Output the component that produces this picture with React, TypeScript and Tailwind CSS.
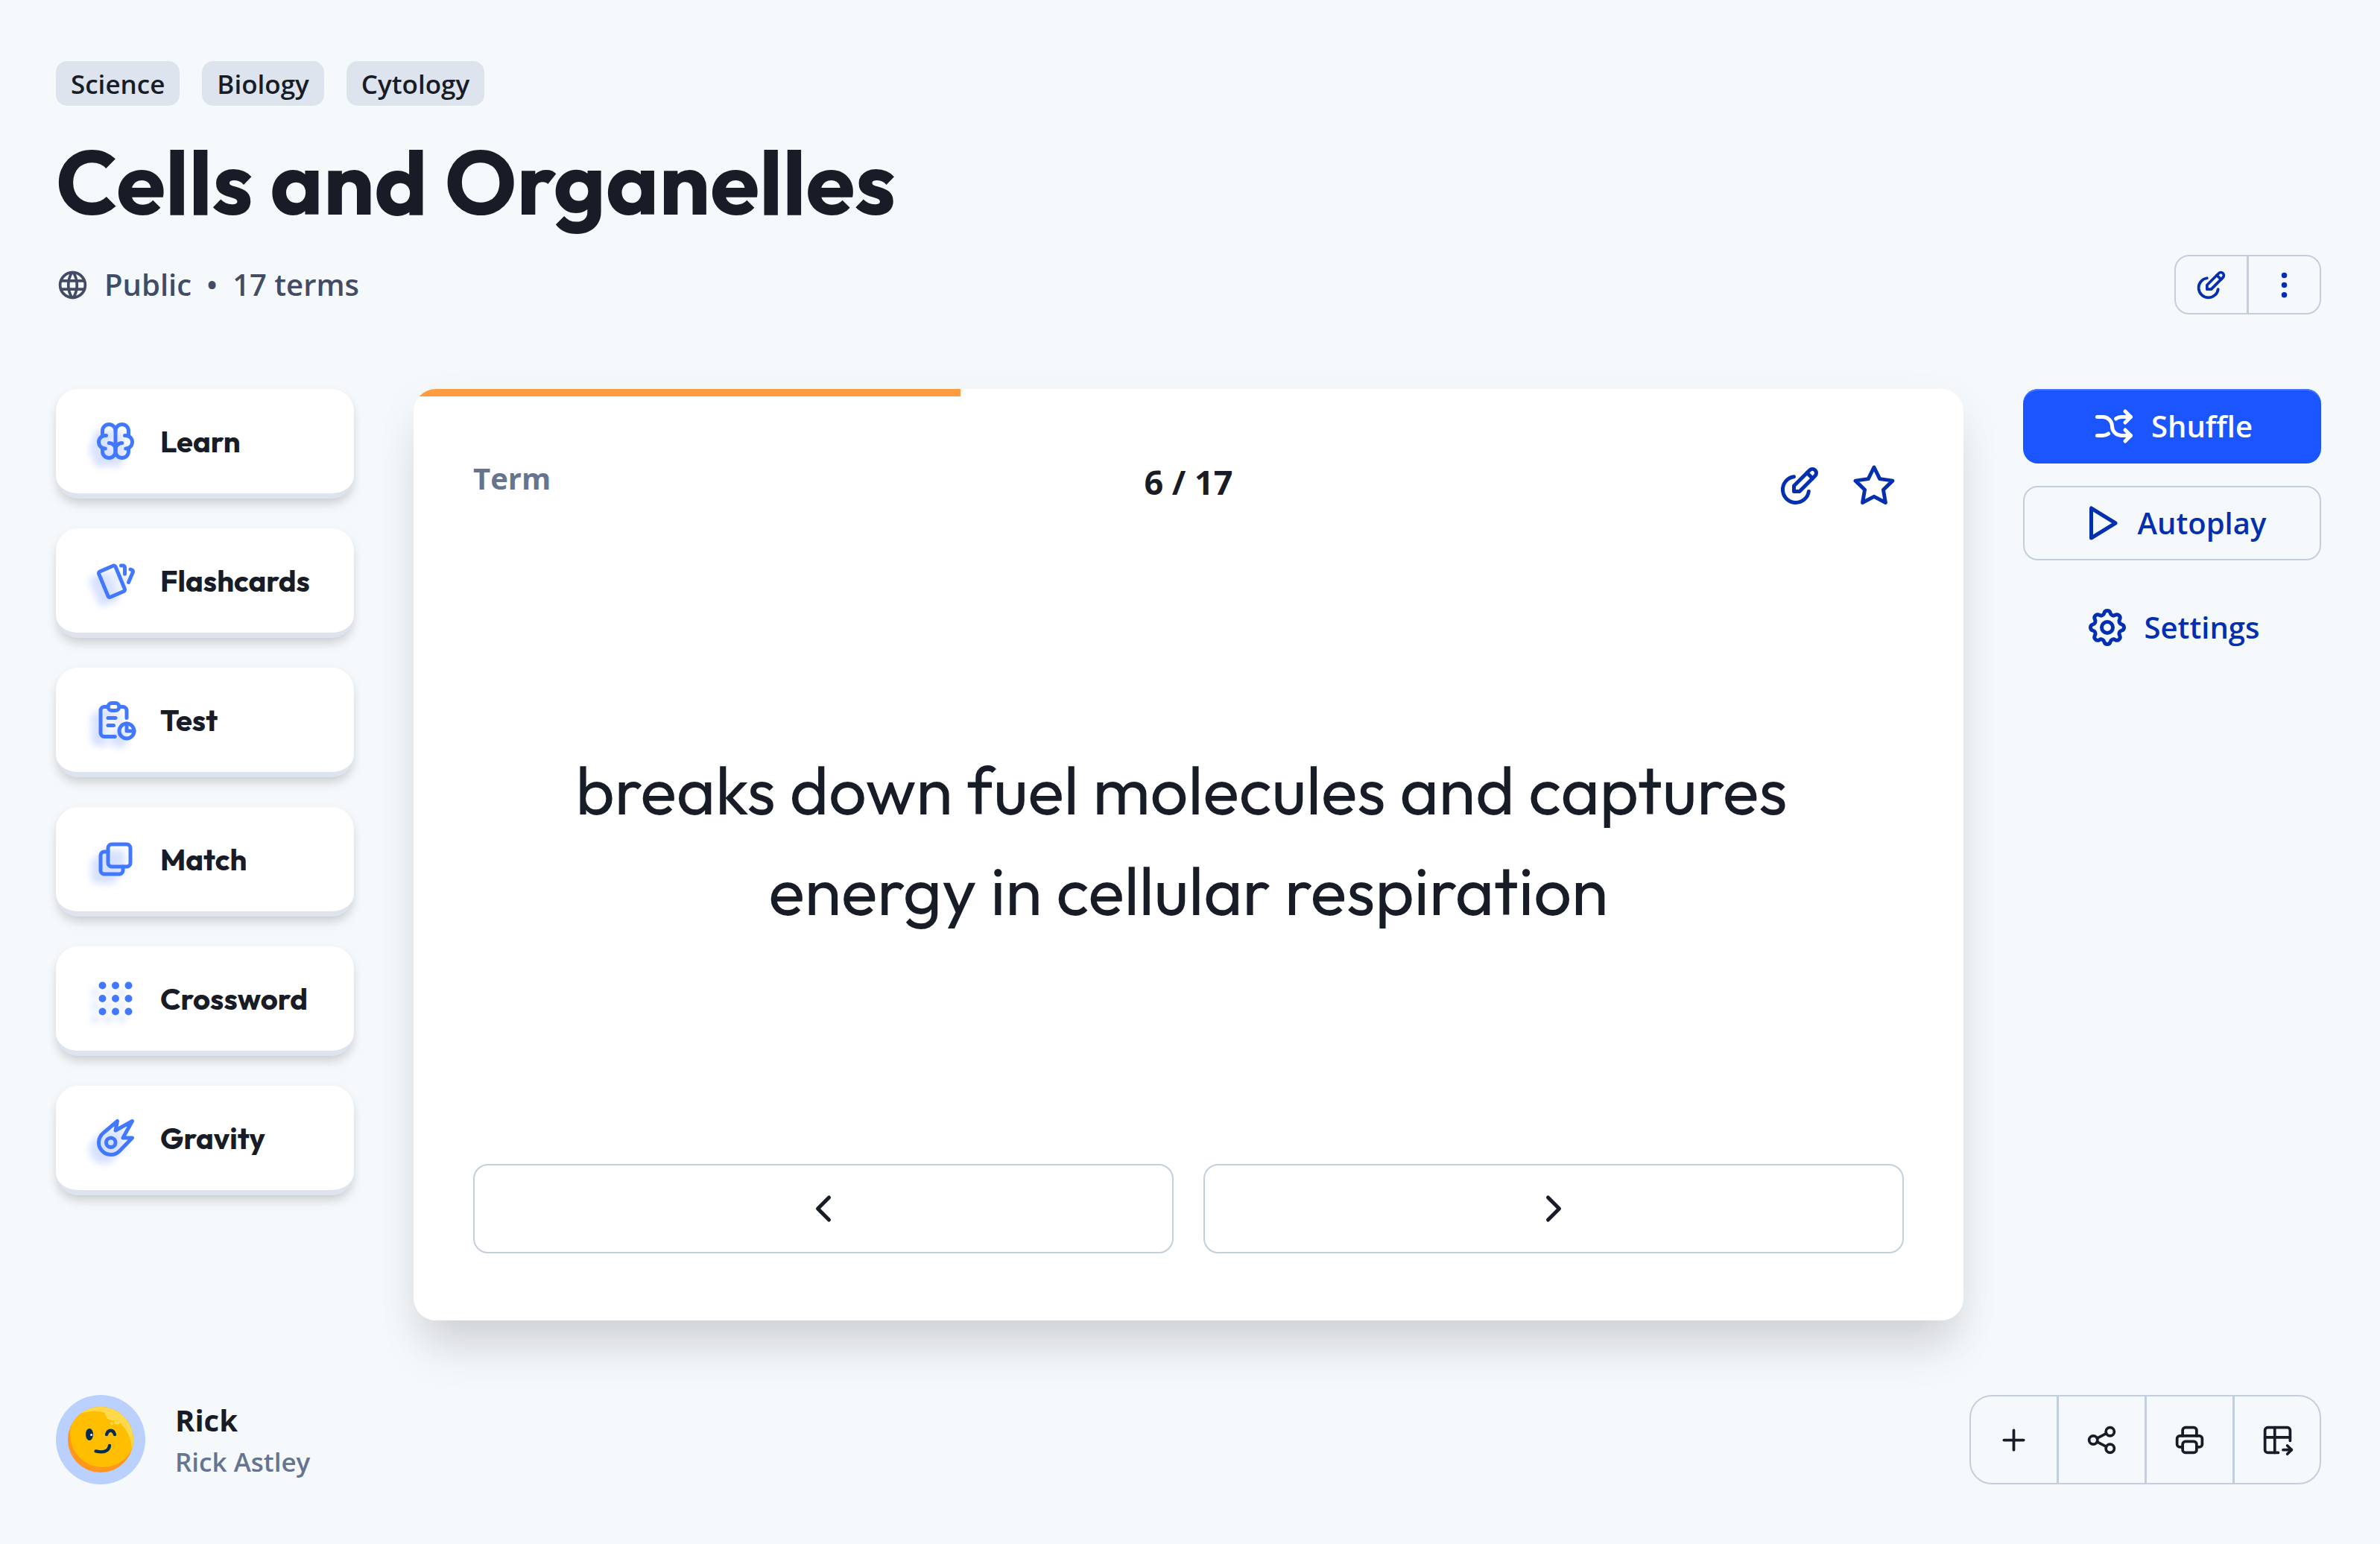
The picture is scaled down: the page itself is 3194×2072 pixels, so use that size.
import type { ReactNode } from "react";

type IconProps = { paths: string[]; className?: string };

function Icon({ paths, className = "" }: IconProps) {
  return (
    <svg
      viewBox="0 0 24 24"
      fill="none"
      stroke="currentColor"
      strokeWidth={2}
      strokeLinecap="round"
      strokeLinejoin="round"
      aria-hidden="true"
      className={`shrink-0 ${className}`}
    >
      {paths.map((d) => (
        <path key={d} d={d} />
      ))}
    </svg>
  );
}

const ring = (x: number, y: number, r: number) =>
  `M${x - r} ${y}a${r} ${r} 0 1 0 ${2 * r} 0a${r} ${r} 0 1 0 ${-2 * r} 0`;

const icons = {
  world: [ring(12, 12, 9), "M3.6 9h16.8", "M3.6 15h16.8", "M11.5 3a17 17 0 0 0 0 18", "M12.5 3a17 17 0 0 1 0 18"],
  brain: [
    "M15.5 13a3.5 3.5 0 0 0 -3.5 3.5v1a3.5 3.5 0 0 0 7 0v-1.8",
    "M8.5 13a3.5 3.5 0 0 1 3.5 3.5v1a3.5 3.5 0 0 1 -7 0v-1.8",
    "M17.5 16a3.5 3.5 0 0 0 0 -7h-.5",
    "M19 9.3v-2.8a3.5 3.5 0 0 0 -7 0",
    "M6.5 16a3.5 3.5 0 0 1 0 -7h.5",
    "M5 9.3v-2.8a3.5 3.5 0 0 1 7 0v10",
  ],
  cards: [
    "M3.604 7.197l7.138 -3.109a.96 .96 0 0 1 1.27 .527l4.924 11.902a1 1 0 0 1 -.514 1.304l-7.137 3.109a.96 .96 0 0 1 -1.271 -.527l-4.924 -11.903a1 1 0 0 1 .514 -1.304z",
    "M15 4h1a1 1 0 0 1 1 1v3.5",
    "M20 6c.264 .112 .52 .217 .768 .315a1 1 0 0 1 .53 1.311l-2.298 5.374",
  ],
  report: [
    "M8 5h-2a2 2 0 0 0 -2 2v12a2 2 0 0 0 2 2h5.697",
    "M18 14v4h4",
    "M18 11v-4a2 2 0 0 0 -2 -2h-2",
    "M8 5a2 2 0 0 1 2 -2h2a2 2 0 0 1 2 2a2 2 0 0 1 -2 2h-2a2 2 0 0 1 -2 -2z",
    ring(18, 18, 4),
    "M8 11h4",
    "M8 15h3",
  ],
  squares: [
    "M8 6a2 2 0 0 1 2 -2h8a2 2 0 0 1 2 2v8a2 2 0 0 1 -2 2h-8a2 2 0 0 1 -2 -2z",
    "M16 16v2a2 2 0 0 1 -2 2h-8a2 2 0 0 1 -2 -2v-8a2 2 0 0 1 2 -2h2",
  ],
  gridDots: [5, 12, 19].flatMap((y) => [5, 12, 19].map((x) => ring(x, y, 1))),
  meteor: [
    "M21 3l-5 9h5l-6.891 7.086a6.5 6.5 0 1 1 -8.855 -9.506l7.746 -6.58l-1 5l9 -5z",
    ring(9.5, 14.5, 2.5),
  ],
  edit: [
    "M12 15l8.385 -8.415a2.1 2.1 0 0 0 -2.97 -2.97l-8.415 8.385v3h3z",
    "M16 5l3 3",
    "M9 7.07a7 7 0 0 0 1 13.93a7 7 0 0 0 6.929 -6",
  ],
  dots: [ring(12, 5, 1), ring(12, 12, 1), ring(12, 19, 1)],
  star: [
    "M12 17.75l-6.172 3.245l1.179 -6.873l-5 -4.867l6.9 -1l3.086 -6.253l3.086 6.253l6.9 1l-5 4.867l1.179 6.873z",
  ],
  shuffle: [
    "M18 4l3 3l-3 3",
    "M18 20l3 -3l-3 -3",
    "M3 7h3a5 5 0 0 1 5 5a5 5 0 0 0 5 5h5",
    "M21 7h-5a4.978 4.978 0 0 0 -3 1m-4 8a4.984 4.984 0 0 1 -3 1h-3",
  ],
  play: ["M7 4v16l13 -8z"],
  settings: [
    "M10.325 4.317c.426 -1.756 2.924 -1.756 3.35 0a1.724 1.724 0 0 0 2.573 1.066c1.543 -.94 3.31 .826 2.37 2.37a1.724 1.724 0 0 0 1.065 2.572c1.756 .426 1.756 2.924 0 3.35a1.724 1.724 0 0 0 -1.066 2.573c.94 1.543 -.826 3.31 -2.37 2.37a1.724 1.724 0 0 0 -2.572 1.065c-.426 1.756 -2.924 1.756 -3.35 0a1.724 1.724 0 0 0 -2.573 -1.066c-1.543 .94 -3.31 -.826 -2.37 -2.37a1.724 1.724 0 0 0 -1.065 -2.572c-1.756 -.426 -1.756 -2.924 0 -3.35a1.724 1.724 0 0 0 1.066 -2.573c-.94 -1.543 .826 -3.31 2.37 -2.37c1 .608 2.296 .07 2.572 -1.065z",
    ring(12, 12, 3),
  ],
  left: ["M15 6l-6 6l6 6"],
  right: ["M9 6l6 6l-6 6"],
  plus: ["M12 5v14", "M5 12h14"],
  share: [ring(6, 12, 3), ring(18, 6, 3), ring(18, 18, 3), "M8.7 10.7l6.6 -3.4", "M8.7 13.3l6.6 3.4"],
  printer: [
    "M17 17h2a2 2 0 0 0 2 -2v-4a2 2 0 0 0 -2 -2h-14a2 2 0 0 0 -2 2v4a2 2 0 0 0 2 2h2",
    "M17 9v-4a2 2 0 0 0 -2 -2h-6a2 2 0 0 0 -2 2v4",
    "M7 15a2 2 0 0 1 2 -2h6a2 2 0 0 1 2 2v4a2 2 0 0 1 -2 2h-6a2 2 0 0 1 -2 -2z",
  ],
  tableExport: [
    "M12.5 21h-7.5a2 2 0 0 1 -2 -2v-14a2 2 0 0 1 2 -2h14a2 2 0 0 1 2 2v7.5",
    "M3 10h18",
    "M10 3v18",
    "M16 19h6",
    "M19 16l3 3l-3 3",
  ],
};

const modes = [
  { label: "Learn", icon: icons.brain },
  { label: "Flashcards", icon: icons.cards },
  { label: "Test", icon: icons.report },
  { label: "Match", icon: icons.squares },
  { label: "Crossword", icon: icons.gridDots },
  { label: "Gravity", icon: icons.meteor },
];

function ModeLink({ label, icon }: { label: string; icon: string[] }) {
  return (
    <a
      href={`#${label.toLowerCase()}`}
      className="flex h-[147px] items-center gap-[30px] rounded-[30px] border-b-[7px] border-[#dde4ee] bg-white px-[50px] shadow-[0_10px_15px_-3px_rgba(0,0,0,0.12),0_4px_15px_-2px_rgba(0,0,0,0.09)]"
    >
      <span className="relative size-[60px] shrink-0">
        <span className="absolute top-[10px] left-[-10px] text-[#bccdff] opacity-60 blur-[5px]">
          <Icon paths={icon} className="size-[60px] fill-[#bccdff]" />
        </span>
        <span className="absolute inset-0 text-[#4278ff]">
          <Icon paths={icon} className="size-[60px]" />
        </span>
      </span>
      <span className="font-[Outfit,Lato,sans-serif] text-[40px] leading-none font-bold">{label}</span>
    </a>
  );
}

function IconButton({ label, paths, className }: { label: string; paths: string[]; className: string }) {
  return (
    <button type="button" aria-label={label} className={`flex items-center justify-center ${className}`}>
      <Icon paths={paths} className="size-[45px]" />
    </button>
  );
}

function Tag({ children }: { children: ReactNode }) {
  return (
    <li>
      <a
        href="#topic"
        className="flex h-[60px] items-center rounded-[15px] bg-[#dee4ee] px-[20px] text-[35px] leading-none font-semibold"
      >
        {children}
      </a>
    </li>
  );
}

function Avatar() {
  return (
    <svg viewBox="0 0 120 120" className="size-[120px] shrink-0" role="img" aria-label="Rick's avatar">
      <defs>
        <clipPath id="face">
          <circle cx="60" cy="60" r="44" />
        </clipPath>
      </defs>
      <circle cx="60" cy="60" r="60" fill="#bad0ff" />
      <g clipPath="url(#face)">
        <rect width="120" height="120" fill="#ff961e" />
        <circle cx="63" cy="53" r="44" fill="#ffbf00" />
        <path d="M32 25C46 21 58 21 66 24C66 32 74 36 83 34C94 44 101 56 102 72L112 60V5H30Z" fill="#ffd94c" />
        <ellipse cx="82" cy="37" rx="4" ry="2.6" fill="#ffd94c" />
        <circle cx="75" cy="38" r="2" fill="#ffd94c" />
      </g>
      <ellipse cx="45" cy="53" rx="5" ry="8" fill="#032d55" />
      <circle cx="47.6" cy="53.4" r="1.5" fill="#fff" />
      <path
        d="M68 53C70 46 77 46 79 53M53.6 75.4C65 78 71 75 72 68"
        fill="none"
        stroke="#032d55"
        strokeWidth="4.4"
        strokeLinecap="round"
      />
    </svg>
  );
}

export default function App() {
  return (
    <div className="flex min-h-screen flex-col bg-[#f6f9fc] pt-[82px] pr-[79px] pb-[80px] pl-[75px] font-['Open_Sans',sans-serif] text-[#181c27]">
      <header>
        <ul className="flex gap-[30px]">
          <Tag>Science</Tag>
          <Tag>Biology</Tag>
          <Tag>Cytology</Tag>
        </ul>
        <h1 className="mt-[30px] font-[Outfit,Lato,sans-serif] text-[120px] leading-[144px] font-bold">Cells and Organelles</h1>
        <div className="mt-[26px] flex items-center justify-between">
          <p className="flex items-center gap-[20px] text-[40px] leading-none font-semibold text-[#424c64]">
            <Icon paths={icons.world} className="size-[45px]" />
            <span>Public</span>
            <span>•</span>
            <span>17 terms</span>
          </p>
          <div className="flex h-[80px] divide-x-[3px] divide-[#c4cfde] overflow-hidden rounded-[20px] border-2 border-[#c4cfde] text-[#0430b0]">
            <IconButton label="Edit set" paths={icons.edit} className="w-[98px]" />
            <IconButton label="More options" paths={icons.dots} className="w-[95px]" />
          </div>
        </div>
      </header>

      <main className="mt-[100px] grid grid-cols-[400px_1fr_400px] items-start gap-[80px]">
        <nav aria-label="Study modes" className="flex flex-col gap-[40px]">
          {modes.map((mode) => (
            <ModeLink key={mode.label} {...mode} />
          ))}
        </nav>

        <section
          aria-label="Flashcard"
          className="flex min-h-[1250px] flex-col overflow-hidden rounded-[30px] bg-white shadow-[0_50px_60px_-12px_rgba(0,0,0,0.1),0_20px_60px_-5px_rgba(0,0,0,0.08)]"
        >
          <div className="h-[10px]">
            <div className="h-full bg-[#ff9c42]" style={{ width: `${(6 / 17) * 100}%` }} />
          </div>
          <div className="flex grow flex-col px-[80px] pt-[80px] pb-[90px]">
            <div className="grid grid-cols-3 items-start">
              <h2 className="text-[40px] leading-[60px] font-bold text-[#66758f]">Term</h2>
              <p className="text-center text-[45px] leading-[70px] font-bold">6 / 17</p>
              <div className="flex h-[80px] items-center justify-end gap-[40px] pr-[10px] text-[#0430b0]">
                <button type="button" aria-label="Edit term">
                  <Icon paths={icons.edit} className="size-[60px]" />
                </button>
                <button type="button" aria-label="Star term">
                  <Icon paths={icons.star} className="size-[60px]" />
                </button>
              </div>
            </div>
            <p className="flex grow items-center justify-center text-center font-[Outfit,Lato,sans-serif] text-[90px] leading-[135px]">
              <span>
                breaks down fuel molecules and captures&nbsp;
                <br />
                energy in cellular respiration
              </span>
            </p>
            <div className="grid grid-cols-2 gap-[40px]">
              <button type="button" aria-label="Previous card" className="flex h-[120px] items-center justify-center rounded-[20px] border-2 border-[#c4cfde]">
                <Icon paths={icons.left} className="size-[60px]" />
              </button>
              <button type="button" aria-label="Next card" className="flex h-[120px] items-center justify-center rounded-[20px] border-2 border-[#c4cfde]">
                <Icon paths={icons.right} className="size-[60px]" />
              </button>
            </div>
          </div>
        </section>

        <aside className="flex flex-col text-[40px] leading-none font-semibold text-[#0430b0]">
          <button type="button" className="flex h-[100px] items-center justify-center gap-[20px] rounded-[20px] bg-[#1a55ff] text-white shadow-[inset_0_2px_0_#4278ff]">
            <Icon paths={icons.shuffle} className="size-[60px]" />
            Shuffle
          </button>
          <button type="button" className="mt-[30px] flex h-[100px] items-center justify-center gap-[20px] rounded-[20px] border-2 border-[#c4cfde]">
            <Icon paths={icons.play} className="size-[60px]" />
            Autoplay
          </button>
          <button type="button" className="mt-[40px] flex h-[100px] items-center justify-center gap-[20px]">
            <Icon paths={icons.settings} className="size-[60px]" />
            Settings
          </button>
        </aside>
      </main>

      <footer className="mt-[100px] flex items-center justify-between">
        <div className="flex items-center gap-[40px]">
          <Avatar />
          <div>
            <p className="text-[40px] leading-[60px] font-bold">Rick</p>
            <p className="text-[35px] leading-[52px] font-semibold text-[#66758f]">Rick Astley</p>
          </div>
        </div>
        <div className="flex h-[120px] divide-x-[3px] divide-[#c4cfde] overflow-hidden rounded-[30px] border-2 border-[#c4cfde]">
          <IconButton label="Add to folder" paths={icons.plus} className="w-[118px]" />
          <IconButton label="Share" paths={icons.share} className="w-[118px]" />
          <IconButton label="Print" paths={icons.printer} className="w-[118px]" />
          <IconButton label="Export" paths={icons.tableExport} className="w-[114px]" />
        </div>
      </footer>
    </div>
  );
}
